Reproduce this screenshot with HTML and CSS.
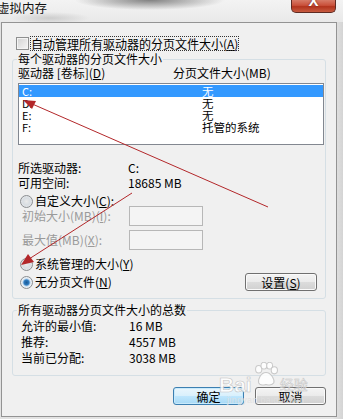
FILE: index.html
```html
<!DOCTYPE html>
<html lang="zh-CN">
<head>
<meta charset="utf-8">
<title>虚拟内存</title>
<link rel="stylesheet" href="styles.css">
</head>
<body>
<div class="window">
  <div class="titlebar">
    <span class="title">虚拟内存</span>
    <span class="close"><span class="close-x">X</span></span>
  </div>
  <div class="dialog">
    <div class="auto-row">
      <span class="checkbox"></span>
      <span class="focus-label">自动管理所有驱动器的分页文件大小(<u>A</u>)</span>
    </div>

    <fieldset class="group group-drives">
      <legend>每个驱动器的分页文件大小</legend>
      <div class="list-head">
        <span class="col-drive">驱动器 [卷标](<u>D</u>)</span>
        <span class="col-size">分页文件大小(MB)</span>
      </div>
      <div class="listbox">
        <div class="list-row selected"><span class="cell-drive">C:</span><span class="cell-size">无</span></div>
        <div class="list-row"><span class="cell-drive">D:</span><span class="cell-size">无</span></div>
        <div class="list-row"><span class="cell-drive">E:</span><span class="cell-size">无</span></div>
        <div class="list-row"><span class="cell-drive">F:</span><span class="cell-size">托管的系统</span></div>
      </div>

      <div class="info-row first"><span class="info-label">所选驱动器:</span><span class="info-value">C:</span></div>
      <div class="info-row"><span class="info-label">可用空间:</span><span class="info-value">18685 MB</span></div>

      <div class="radio-row r-custom"><span class="radio"></span><span>自定义大小(<u>C</u>):</span></div>
      <div class="field-row f-initial"><span class="field-label">初始大小(MB)(<u>I</u>):</span><span class="textbox"></span></div>
      <div class="field-row f-max"><span class="field-label">最大值(MB)(<u>X</u>):</span><span class="textbox"></span></div>
      <div class="radio-row r-system"><span class="radio"></span><span>系统管理的大小(<u>Y</u>)</span></div>
      <div class="none-row">
        <div class="radio-line"><span class="radio checked"></span><span>无分页文件(<u>N</u>)</span></div>
        <button class="btn btn-set">设置(<u>S</u>)</button>
      </div>
    </fieldset>

    <fieldset class="group group-total">
      <legend>所有驱动器分页文件大小的总数</legend>
      <div class="total-row first"><span class="total-label">允许的最小值:</span><span>16 MB</span></div>
      <div class="total-row"><span class="total-label">推荐:</span><span>4557 MB</span></div>
      <div class="total-row"><span class="total-label">当前已分配:</span><span>3038 MB</span></div>
    </fieldset>

    <div class="actions">
      <button class="btn btn-default">确定</button>
      <button class="btn">取消</button>
    </div>
  </div>

  <svg class="annotations" width="343" height="419" viewBox="0 0 343 419">
    <line x1="268" y1="207" x2="30" y2="103" stroke="#b3272a" stroke-width="1"/>
    <polygon points="23,100 36,101 32,109" fill="#b3272a"/>
    <line x1="132" y1="193" x2="29" y2="259" stroke="#b3272a" stroke-width="1"/>
    <polygon points="21,265 28,254 34,262" fill="#b3272a"/>
  </svg>

  <div class="watermark">
    <div class="wm-logo">
      <span class="wm-bai">Bai</span>
      <svg class="wm-paw" width="28" height="25" viewBox="0 0 26 24">
        <ellipse cx="6" cy="7" rx="3" ry="3.6" fill="#fff" stroke="#c4c4c4" stroke-width="1"/>
        <ellipse cx="11" cy="3.5" rx="2.8" ry="3.2" fill="#fff" stroke="#c4c4c4" stroke-width="1"/>
        <ellipse cx="16.5" cy="3.5" rx="2.8" ry="3.2" fill="#fff" stroke="#c4c4c4" stroke-width="1"/>
        <ellipse cx="21" cy="8" rx="3" ry="3.4" fill="#fff" stroke="#c4c4c4" stroke-width="1"/>
        <path d="M13 10 C8 10 5 17 6 20 C7 23 11 22 13 21.5 C15 22 19 23 20.5 20 C21.5 17 18 10 13 10 Z" fill="#fff" stroke="#c4c4c4" stroke-width="1"/>
      </svg>
      <span class="wm-jy">经验</span>
    </div>
    <div class="wm-url">jingyan.baidu.com</div>
  </div>
</div>
</body>
</html>
```
FILE: styles.css
```css
html, body {
  margin: 0;
  padding: 0;
}

body {
  font-family: "Noto Sans CJK SC", "Liberation Sans", sans-serif;
  font-size: 12px;
  line-height: 14px;
  color: #000;
  background: #e4e4e4;
}

.window {
  position: relative;
  width: 343px;
  height: 419px;
  overflow: hidden;
  background: linear-gradient(to right, #e2e2e2 0, #e6e6e6 97%, #d4d4d4 100%);
}

/* ---------- title bar ---------- */
.titlebar {
  height: 22px;
  display: flex;
  justify-content: space-between;
  align-items: flex-start;
  background:
    radial-gradient(ellipse 75px 10px at 150px 0, rgba(100,100,100,0.8), rgba(150,150,150,0) 100%),
    radial-gradient(ellipse 40px 6px at 50px 18px, rgba(150,150,150,0.35), rgba(150,150,150,0) 100%),
    linear-gradient(to bottom, #f3f3f3, #e9e9e9);
}

.title {
  margin-left: -3px;
  padding-top: 1px;
  line-height: 14px;
  font-size: 12.5px;
  color: #111;
}

.close {
  width: 45px;
  height: 13px;
  margin-right: 7px;
  box-sizing: border-box;
  border: 1px solid #5e2a22;
  border-top: none;
  border-radius: 0 0 5px 5px;
  background: linear-gradient(to bottom, #d77b68 0%, #c9503a 45%, #b3341d 55%, #c75b40 100%);
  display: flex;
  justify-content: center;
  overflow: hidden;
}

.close-x {
  margin-top: -8px;
  font-family: "Liberation Sans", sans-serif;
  font-weight: bold;
  font-size: 15px;
  line-height: 18px;
  color: #fff;
  text-shadow: 0 0 2px #5a1d12;
}

/* ---------- dialog body ---------- */
.dialog {
  margin-left: 1px;
  width: 336px;
  height: 395px;
  box-sizing: border-box;
  border: 1px solid #939393;
  background: #f0f0f0;
  padding: 0 10px;
}

.auto-row {
  margin-top: 13px;
  margin-left: 4px;
  height: 15px;
  display: flex;
  align-items: center;
  gap: 1px;
}

.checkbox {
  width: 13px;
  height: 13px;
  box-sizing: border-box;
  border: 1px solid #8e8f8f;
  background: linear-gradient(135deg, #d2d2d2 0%, #e8e8e8 60%, #f6f6f6 100%);
  box-shadow: inset 0 0 0 1px #f4f4f4;
}

.focus-label {
  height: 15px;
  line-height: 15px;
  padding: 0 1px;
  outline: 1px dotted #333;
  outline-offset: -1px;
}

/* ---------- group boxes ---------- */
.group {
  margin: 0;
  min-width: 0;
  border: 1px solid #d5dfe5;
  border-radius: 3px;
  padding: 0 1px 0 5px;
}

.group legend {
  margin-left: -1px;
  padding: 0 1px;
  height: 14px;
  line-height: 14px;
}

.group-drives {
  margin-top: 1px;
  padding-bottom: 7px;
}

.group-total {
  margin-top: 4px;
  padding-bottom: 9px;
}

.list-head {
  height: 14px;
  display: flex;
}

.col-drive {
  width: 155px;
}

.listbox {
  margin-top: 3px;
  height: 62px;
  box-sizing: border-box;
  border: 1px solid #828790;
  background: #fff;
  padding-top: 1px;
}

.list-row {
  height: 12px;
  line-height: 12px;
  font-size: 11px;
  display: flex;
}

.list-row.selected {
  background: #3399ff;
  color: #fff;
}

.cell-drive {
  width: 180px;
  padding-left: 3px;
}

.cell-size {
  font-size: 11.5px;
}

.info-row {
  height: 15px;
  line-height: 15px;
  display: flex;
}

.info-row.first {
  margin-top: 15px;
}

.info-label {
  width: 110px;
}

.radio-row {
  height: 14px;
  display: flex;
  align-items: center;
  gap: 2px;
  padding-left: 2px;
}

.r-custom {
  margin-top: 4px;
}

.r-system {
  margin-top: 7px;
}

.radio {
  width: 13px;
  height: 13px;
  box-sizing: border-box;
  border-radius: 50%;
  border: 1px solid #8b8e91;
  background: radial-gradient(circle at 50% 50%, #eaeaea 0, #d8dde2 45%, #f0f0f0 100%);
}

.radio.checked {
  background: radial-gradient(circle at 50% 50%, #1a5a96 0, #2f7cc0 2.6px, #9cc3e6 3.4px, #e7eef4 4.4px, #f4f4f4 100%);
}

.field-row {
  height: 20px;
  display: flex;
  align-items: center;
  color: #9a9a9a;
}

.f-initial {
  margin-top: -2px;
}

.f-max {
  margin-top: 4px;
}

.field-label {
  width: 107px;
  padding-left: 4px;
}

.textbox {
  width: 74px;
  height: 20px;
  box-sizing: border-box;
  border: 1px solid #b7b7b7;
  background: #f4f4f4;
}

.none-row {
  margin-top: 2px;
  height: 18px;
  display: flex;
  justify-content: space-between;
  align-items: center;
}

.radio-line {
  display: flex;
  align-items: center;
  gap: 2px;
  padding-left: 2px;
}

/* ---------- buttons ---------- */
.btn {
  height: 18px;
  box-sizing: border-box;
  padding: 0;
  font: inherit;
  line-height: 15px;
  color: #000;
  border: 1px solid #707070;
  border-radius: 3px;
  background: linear-gradient(to bottom, #f4f4f4 0%, #ebebeb 48%, #dcdcdc 52%, #d0d0d0 100%);
  box-shadow: inset 0 0 0 1px #fafafa;
}

.btn-set {
  width: 72px;
  margin-right: 7px;
}

.btn-default {
  border-color: #3c7fb1;
  background: linear-gradient(to bottom, #eaf6fd 0%, #d9f0fc 48%, #bee6fd 52%, #a7d9f5 100%);
  box-shadow: inset 0 0 0 1px #c8eafc;
}

/* ---------- totals ---------- */
.total-row {
  height: 16px;
  line-height: 16px;
  display: flex;
  padding-left: 3px;
}

.total-row.first {
  margin-top: 1px;
}

.total-label {
  width: 108px;
}

.actions {
  margin-top: 11px;
  display: flex;
  justify-content: flex-end;
  gap: 11px;
}

.actions .btn {
  width: 71px;
}

/* ---------- overlays ---------- */
.annotations {
  position: absolute;
  left: 0;
  top: 0;
  pointer-events: none;
}

.watermark {
  position: absolute;
  left: 219px;
  top: 362px;
  width: 104px;
  opacity: 0.88;
  pointer-events: none;
}

.wm-logo {
  height: 33px;
  display: flex;
  align-items: flex-end;
}

.wm-bai {
  font-family: "Liberation Sans", sans-serif;
  font-weight: bold;
  font-size: 21px;
  line-height: 21px;
  color: #fff;
  -webkit-text-stroke: 0.6px #bdbdbd;
}

.wm-paw {
  align-self: flex-start;
}

.wm-jy {
  font-size: 14px;
  line-height: 16px;
  color: #fff;
  -webkit-text-stroke: 0.5px #bdbdbd;
  margin-bottom: 3px;
}

.wm-url {
  padding-left: 8px;
  font-family: "Liberation Sans", sans-serif;
  font-size: 9px;
  line-height: 10px;
  color: #e0e0e0;
  letter-spacing: 0.3px;
}
```
